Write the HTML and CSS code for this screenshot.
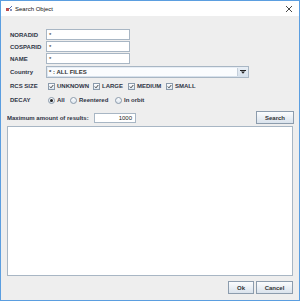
FILE: index.html
```html
<!DOCTYPE html>
<html>
<head>
<meta charset="utf-8">
<link rel="stylesheet" href="styles.css">
</head>
<body>
<div class="window">
  <div class="titlebar">
    <svg class="appicon" width="8" height="8" viewBox="0 0 8 8">
      <rect x="1" y="3" width="3" height="3" fill="#c05050"/>
      <path d="M4 4 L7 1" stroke="#5070b0" stroke-width="1"/>
      <rect x="5" y="4" width="2" height="2" fill="#8090c0"/>
    </svg>
    <span class="title">Search Object</span>
    <svg class="close" width="8" height="8" viewBox="0 0 8 8">
      <path d="M1 1 L7 7 M7 1 L1 7" stroke="#333" stroke-width="0.9"/>
    </svg>
  </div>
  <div class="content">
    <div class="form">
      <div class="row r-text">
        <span class="label">NORADID</span>
        <div class="textfield">*</div>
      </div>
      <div class="row r-text">
        <span class="label">COSPARID</span>
        <div class="textfield">*</div>
      </div>
      <div class="row r-text">
        <span class="label">NAME</span>
        <div class="textfield">*</div>
      </div>
      <div class="row r-combo">
        <span class="label">Country</span>
        <div class="combo">
          <span class="combo-text">* : ALL FILES</span>
          <span class="combo-btn">
            <svg width="6" height="4" viewBox="0 0 6 4"><rect x="0" y="0" width="6" height="1" fill="#222"/><path d="M1 1.5 L5 1.5 L3 3.8 Z" fill="#222"/></svg>
          </span>
        </div>
      </div>
      <div class="row r-opt">
        <span class="label">RCS SIZE</span>
        <div class="opts">
          <span class="opt w-unknown"><span class="cb"><svg width="5" height="5" viewBox="0 0 5 5"><path d="M0.8 2.6 L2 3.8 L4.3 1" stroke="#333" stroke-width="0.9" fill="none"/></svg></span>UNKNOWN</span>
          <span class="opt w-large"><span class="cb"><svg width="5" height="5" viewBox="0 0 5 5"><path d="M0.8 2.6 L2 3.8 L4.3 1" stroke="#333" stroke-width="0.9" fill="none"/></svg></span>LARGE</span>
          <span class="opt w-medium"><span class="cb"><svg width="5" height="5" viewBox="0 0 5 5"><path d="M0.8 2.6 L2 3.8 L4.3 1" stroke="#333" stroke-width="0.9" fill="none"/></svg></span>MEDIUM</span>
          <span class="opt"><span class="cb"><svg width="5" height="5" viewBox="0 0 5 5"><path d="M0.8 2.6 L2 3.8 L4.3 1" stroke="#333" stroke-width="0.9" fill="none"/></svg></span>SMALL</span>
        </div>
      </div>
      <div class="row r-opt">
        <span class="label">DECAY</span>
        <div class="opts">
          <span class="opt w-all"><span class="rb checked"></span>All</span>
          <span class="opt w-reent"><span class="rb"></span>Reentered</span>
          <span class="opt"><span class="rb"></span>In orbit</span>
        </div>
      </div>
    </div>
    <div class="maxrow">
      <div class="maxlabel">Maximum amount of results:</div>
      <div class="numfield">1000</div>
      <div class="spacer"></div>
      <button class="btn search">Search</button>
    </div>
    <div class="results"></div>
    <div class="buttons">
      <button class="btn ok">Ok</button>
      <button class="btn cancel">Cancel</button>
    </div>
  </div>
</div>
</body>
</html>
```
FILE: styles.css
```css
html, body {
  margin: 0;
  padding: 0;
  background: #ffffff;
}
body {
  font-family: "Liberation Sans", Arial, sans-serif;
  font-size: 6px;
  color: #222;
}
.window {
  width: 300px;
  height: 301px;
  box-sizing: border-box;
  border: 1px solid #5b9ee0;
  display: flex;
  flex-direction: column;
  background: #eeeeee;
}
.titlebar {
  height: 15px;
  background: #ffffff;
  display: flex;
  align-items: center;
  padding-left: 4px;
  padding-right: 5px;
  flex: none;
}
.appicon { margin-right: 2px; }
.title {
  font-size: 6px;
  color: #111;
  flex: 1;
}
.close { margin-right: 1px; }
.content {
  flex: 1;
  display: flex;
  flex-direction: column;
  padding: 13px 6px 0 6px;
}
.form {
  padding-left: 3px;
  display: flex;
  flex-direction: column;
}
.row {
  display: flex;
  align-items: center;
}
.r-text { height: 11px; margin-bottom: 1px; }
.r-combo { height: 12px; margin-top: 1px; margin-bottom: 3px; }
.r-opt { height: 10px; margin-bottom: 4px; }
.label {
  width: 36px;
  flex: none;
  font-weight: bold;
  color: #2e3445;
  white-space: nowrap;
}
.textfield {
  width: 84px;
  height: 11px;
  box-sizing: border-box;
  background: #fff;
  border: 1px solid #a8b6c4;
  padding-left: 2px;
  line-height: 10px;
  font-size: 6px;
  color: #222;
}
.combo {
  width: 203px;
  height: 12px;
  box-sizing: border-box;
  border: 1px solid #a8b6c4;
  background: linear-gradient(#e8eef5, #d6e1ec);
  display: flex;
  align-items: center;
}
.combo-text {
  flex: 1;
  margin-left: 1px;
  height: 8px;
  line-height: 8px;
  background: #fafcfe;
  border-right: 1px solid #c4cfdb;
  padding-left: 1px;
  font-weight: bold;
  color: #333;
}
.combo-btn {
  width: 10px;
  display: flex;
  align-items: center;
  justify-content: center;
}
.opts {
  display: flex;
  align-items: center;
  margin-left: 2px;
}
.opt {
  display: flex;
  align-items: center;
  font-weight: bold;
  color: #2e3445;
  white-space: nowrap;
  flex: none;
}
.w-unknown { width: 45px; }
.w-large { width: 35px; }
.w-medium { width: 38px; }
.w-all { width: 22px; }
.w-reent { width: 45px; }
.cb {
  width: 7px;
  height: 7px;
  box-sizing: border-box;
  border: 1px solid #8a9aab;
  background: linear-gradient(#fdfdfe, #dde6ef);
  margin-right: 2px;
  display: flex;
  align-items: center;
  justify-content: center;
}
.rb {
  width: 7px;
  height: 7px;
  box-sizing: border-box;
  border: 1px solid #8a9aab;
  border-radius: 50%;
  background: linear-gradient(#fdfdfe, #dde6ef);
  margin-right: 2px;
  position: relative;
}
.rb.checked::after {
  content: "";
  position: absolute;
  left: 1px;
  top: 1px;
  width: 3px;
  height: 3px;
  border-radius: 50%;
  background: #222;
}
.maxrow {
  display: grid;
  grid-template-columns: 87px 42px 1fr 38px;
  align-items: center;
  height: 13px;
  margin-top: 2px;
  margin-right: -1px;
}
.maxlabel {
  white-space: nowrap;
  overflow: hidden;
  font-weight: bold;
  color: #2e3445;
}
.numfield {
  height: 10px;
  box-sizing: border-box;
  border: 1px solid #a8b6c4;
  background: #fff;
  text-align: right;
  padding-right: 3px;
  line-height: 9px;
  font-size: 6px;
}
.btn {
  font-family: "Liberation Sans", Arial, sans-serif;
  font-size: 6px;
  font-weight: bold;
  color: #333;
  box-sizing: border-box;
  border: 1px solid #8c9cad;
  background: linear-gradient(#fbfcfd, #dae3ed);
  padding: 0;
  margin: 0;
  height: 13px;
}
.search { width: 38px; height: 13px; }
.results {
  height: 150px;
  margin-top: 2px;
  box-sizing: border-box;
  background: #fff;
  border: 1px solid #a8b6c4;
}
.buttons {
  display: flex;
  justify-content: flex-end;
  margin-top: 5px;
  gap: 2px;
}
.ok { width: 26px; }
.cancel { width: 37px; }
```
